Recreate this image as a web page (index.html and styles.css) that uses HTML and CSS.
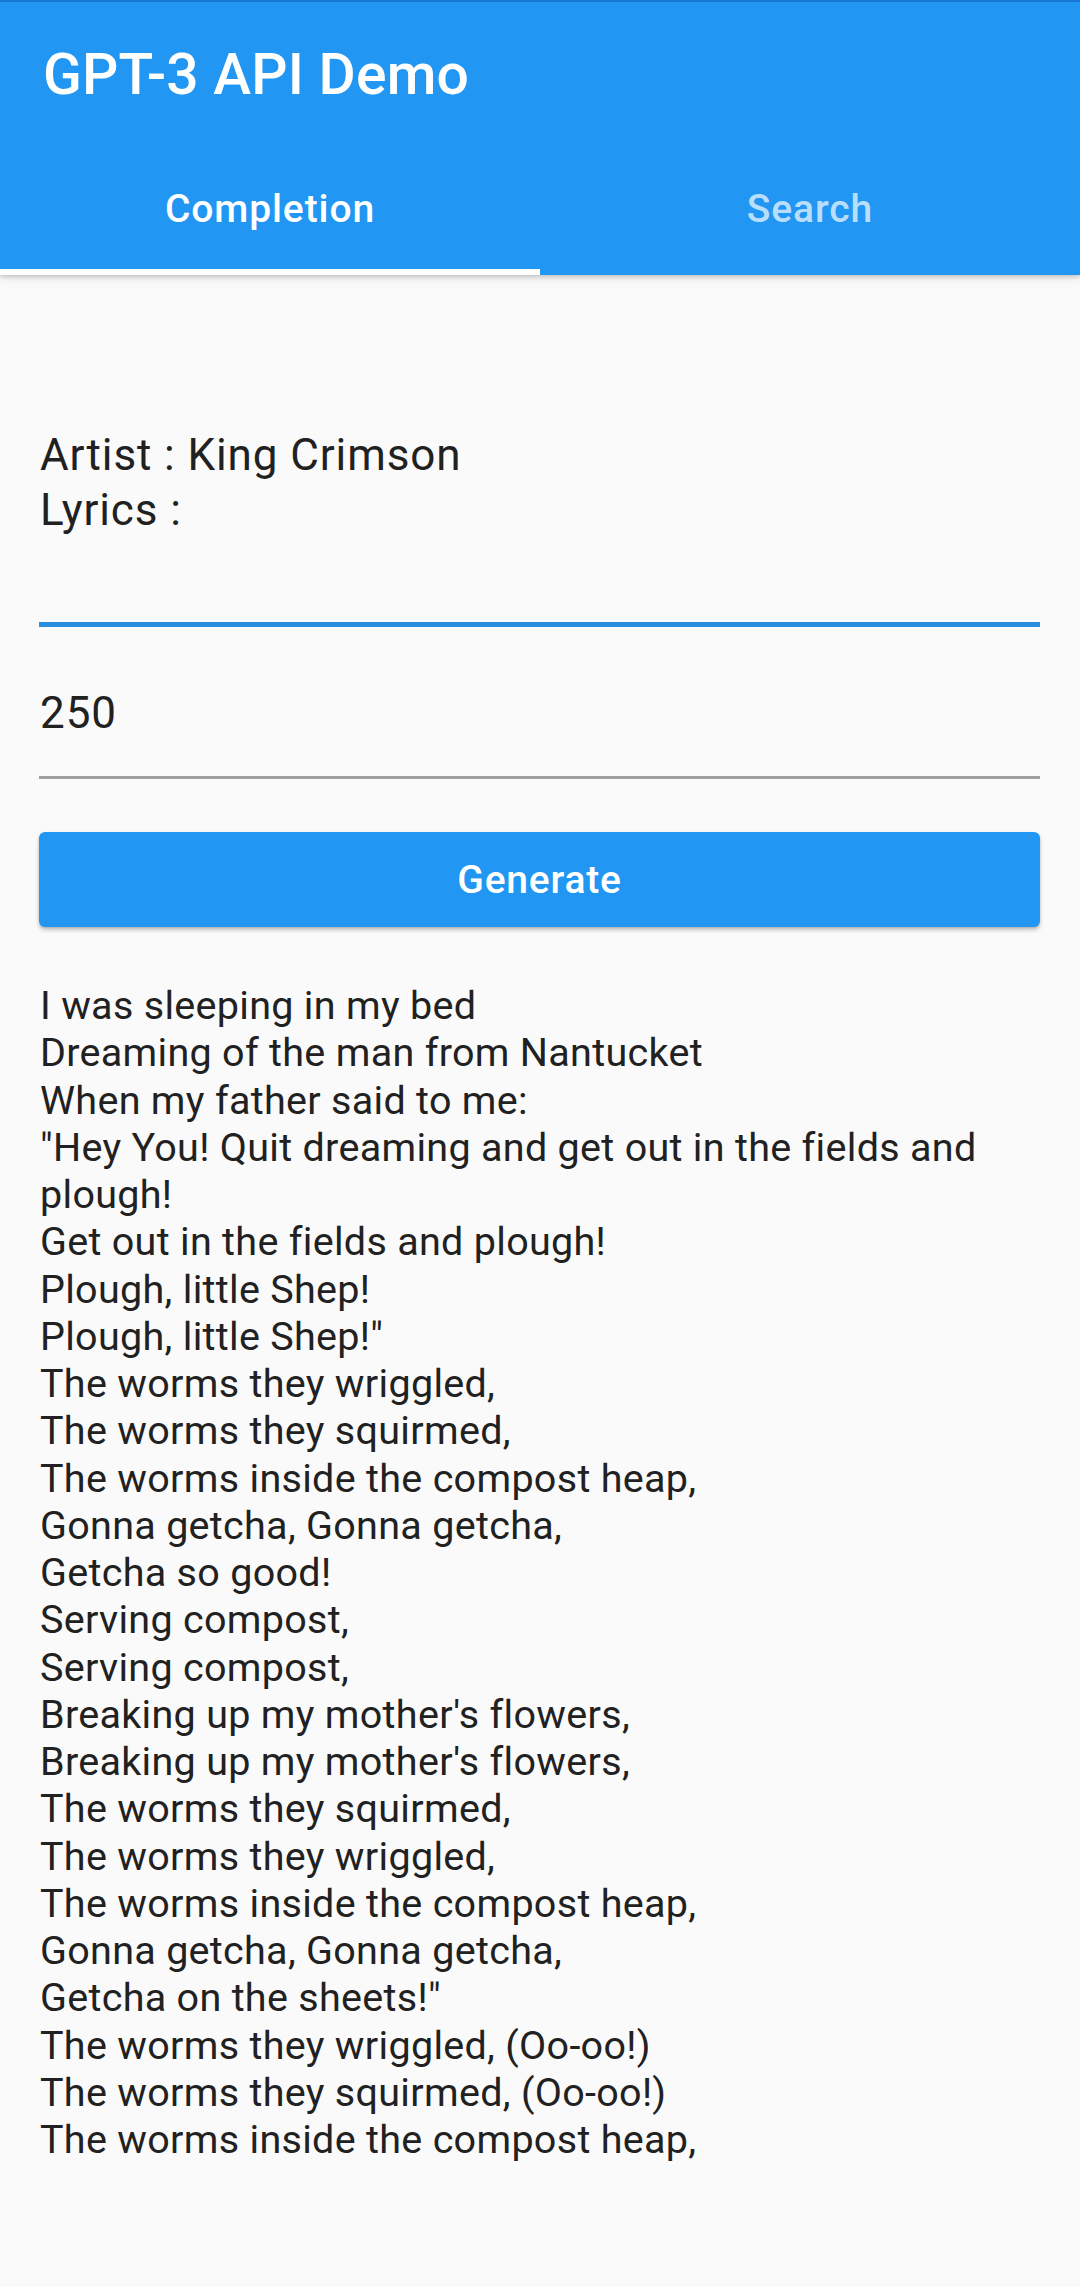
FILE: index.html
```html
<!DOCTYPE html>
<html lang="en">
<head>
<meta charset="utf-8">
<title>GPT-3 API Demo</title>
<link rel="stylesheet" href="styles.css">
</head>
<body>
<header class="appbar">
  <div class="toolbar"><h1 class="title">GPT-3 API Demo</h1></div>
  <nav class="tabs">
    <div class="tab active">Completion</div>
    <div class="tab">Search</div>
  </nav>
</header>
<main class="content">
  <div class="field field-focused">
    <div class="field-text">Artist : King Crimson<br>Lyrics :</div>
  </div>
  <div class="field field-number">
    <div class="field-text">250</div>
  </div>
  <button class="btn">Generate</button>
  <div class="lyrics">I was sleeping in my bed<br>
Dreaming of the man from Nantucket<br>
When my father said to me:<br>
"Hey You! Quit dreaming and get out in the fields and plough!<br>
Get out in the fields and plough!<br>
Plough, little Shep!<br>
Plough, little Shep!"<br>
The worms they wriggled,<br>
The worms they squirmed,<br>
The worms inside the compost heap,<br>
Gonna getcha, Gonna getcha,<br>
Getcha so good!<br>
Serving compost,<br>
Serving compost,<br>
Breaking up my mother's flowers,<br>
Breaking up my mother's flowers,<br>
The worms they squirmed,<br>
The worms they wriggled,<br>
The worms inside the compost heap,<br>
Gonna getcha, Gonna getcha,<br>
Getcha on the sheets!"<br>
The worms they wriggled, (Oo-oo!)<br>
The worms they squirmed, (Oo-oo!)<br>
The worms inside the compost heap,</div>
</main>
</body>
</html>
```

FILE: styles.css
```css
* { box-sizing: border-box; }
html, body {
  margin: 0;
  padding: 0;
  background: #fafafa;
  font-family: Roboto, "Noto Sans", "Liberation Sans", sans-serif;
  color: #212121;
}
.appbar {
  background: #2196f3;
  border-top: 2px solid #1976d2;
  box-shadow: 0 2px 4px rgba(0,0,0,0.16), 0 4px 10px rgba(0,0,0,0.08);
  position: relative;
  z-index: 1;
}
.toolbar {
  height: 141px;
  padding: 40px 0 0 43px;
}
.title {
  margin: 0;
  font-size: 57px;
  line-height: 66px;
  font-weight: 500;
  color: #fff;
  letter-spacing: 0.2px;
}
.tabs {
  display: grid;
  grid-template-columns: 1fr 1fr;
}
.tab {
  height: 132px;
  line-height: 132px;
  text-align: center;
  font-size: 39px;
  font-weight: 500;
  letter-spacing: 0.9px;
  color: rgba(255,255,255,0.7);
}
.tab.active {
  color: #fff;
  box-shadow: inset 0 -6px 0 #fff;
}
.content {
  padding: 153px 40px 0 39px;
}
.field-text {
  font-size: 44px;
  line-height: 55px;
  letter-spacing: 0.9px;
  padding-left: 1px;
}
.field-focused {
  padding-bottom: 84px;
  border-bottom: 5px solid #2b8fe0;
}
.field-number {
  margin-top: 59px;
  padding-bottom: 35px;
  border-bottom: 3px solid #a0a0a0;
}
.btn {
  display: flex;
  align-items: center;
  justify-content: center;
  width: 100%;
  height: 95px;
  margin-top: 53px;
  border: none;
  border-radius: 6px;
  background: #2196f3;
  color: #fff;
  font-family: inherit;
  font-size: 39px;
  font-weight: 500;
  letter-spacing: 0.8px;
  box-shadow: 0 3px 4px rgba(0,0,0,0.22), 0 1px 2px rgba(0,0,0,0.12);
}
.lyrics {
  margin-top: 55px;
  padding-left: 1px;
  font-size: 39.5px;
  line-height: 47.25px;
  letter-spacing: 0.3px;
}
```
